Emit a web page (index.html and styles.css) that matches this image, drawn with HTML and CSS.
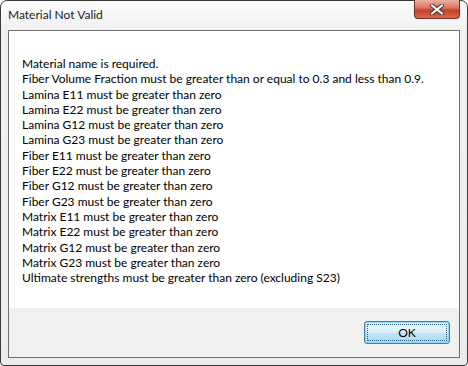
FILE: index.html
```html
<!DOCTYPE html>
<html lang="en">
<head>
    <meta charset="UTF-8">
    <title>Material Not Valid</title>
    <link rel="stylesheet" href="styles.css">
</head>
<body>

    <div class="window">
        <div class="titlebar">
            <div class="title">Material Not Valid</div>
            <div class="close-button">
                <svg width="16" height="11" viewBox="0 0 16 11">
                    <path d="M3 1.5 L13 9.5 M13 1.5 L3 9.5" stroke="#4a3a3a" stroke-width="4.2" stroke-linecap="round"/>
                    <path d="M3 1.5 L13 9.5 M13 1.5 L3 9.5" stroke="#ffffff" stroke-width="2.2" stroke-linecap="round"/>
                </svg>
            </div>
        </div>
        <div class="client">
            <div class="messages">
                <div>Material name is required.</div>
                <div>Fiber Volume Fraction must be greater than or equal to 0.3 and less than 0.9.</div>
                <div>Lamina E11 must be greater than zero</div>
                <div>Lamina E22 must be greater than zero</div>
                <div>Lamina G12 must be greater than zero</div>
                <div>Lamina G23 must be greater than zero</div>
                <div>Fiber E11 must be greater than zero</div>
                <div>Fiber E22 must be greater than zero</div>
                <div>Fiber G12 must be greater than zero</div>
                <div>Fiber G23 must be greater than zero</div>
                <div>Matrix E11 must be greater than zero</div>
                <div>Matrix E22 must be greater than zero</div>
                <div>Matrix G12 must be greater than zero</div>
                <div>Matrix G23 must be greater than zero</div>
                <div>Ultimate strengths must be greater than zero (excluding S23)</div>
            </div>
            <div class="footer">
                <button class="ok-button"><span class="focus">OK</span></button>
            </div>
        </div>
    </div>

</body>
</html>
```

FILE: styles.css
```css
body {
    margin: 0;
    background-color: #ffffff;
    font-family: Lato, "Open Sans", sans-serif;
    font-size: 12px;
    color: #000000;
}
.window {
    box-sizing: border-box;
    width: 468px;
    height: 366px;
    border: 1px solid #3a3a3a;
    border-radius: 7px 7px 4px 4px;
    background: linear-gradient(#fbfbfb, #f0f0f0 30px, #ececec);
    padding: 0 7px 7px 7px;
    display: flex;
    flex-direction: column;
}
.titlebar {
    height: 29px;
    display: flex;
    align-items: flex-start;
    justify-content: space-between;
}
.title {
    margin-top: 5px;
    line-height: 18px;
    color: #1a1a1a;
}
.close-button {
    box-sizing: border-box;
    width: 46px;
    height: 19px;
    margin-top: -1px;
    border: 1px solid #7a3026;
    border-top: none;
    border-radius: 0 0 4px 4px;
    background: linear-gradient(#eab0a2, #d9735c 45%, #c4412a 55%, #d5664a);
    display: flex;
    align-items: center;
    justify-content: center;
}
.client {
    flex-grow: 1;
    border: 1px solid #707070;
    display: flex;
    flex-direction: column;
}
.messages {
    flex-grow: 1;
    background-color: #ffffff;
    padding: 25px 13px 0 13px;
    line-height: 15.3px;
}
.footer {
    height: 49px;
    background-color: #f0f0f0;
    display: flex;
    justify-content: flex-end;
    align-items: flex-start;
    padding: 13px 9px 0 0;
    box-sizing: border-box;
}
.ok-button {
    width: 86px;
    height: 23px;
    padding: 2px;
    border: 1px solid #3c7fb1;
    border-radius: 3px;
    background: linear-gradient(#e8f5fc, #dcf0fb 50%, #c4e5f6 51%, #a9d8f0);
    box-shadow: inset 0 0 0 1px #8ed4f5;
    font-family: inherit;
    font-size: 12px;
    color: #000000;
    display: flex;
}
.focus {
    flex-grow: 1;
    border: 1px dotted #2a5a7a;
    line-height: 15px;
    text-align: center;
}
```
